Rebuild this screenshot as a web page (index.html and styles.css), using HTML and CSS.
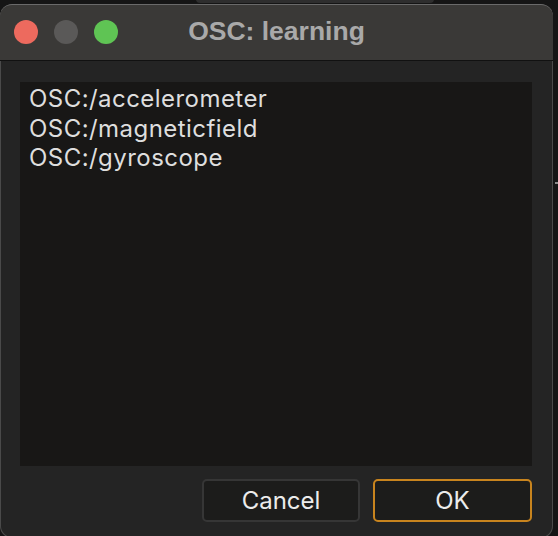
FILE: index.html
```html
<!DOCTYPE html>
<html>
<head>
<meta charset="utf-8">
<link rel="stylesheet" href="styles.css">
</head>
<body>
<div class="backdrop">
  <div class="behind"></div>
  <div class="tick"></div>
  <div class="window">
    <div class="titlebar">
      <div class="lights">
        <span class="light red"></span>
        <span class="light grey"></span>
        <span class="light green"></span>
      </div>
      <div class="title">OSC: learning</div>
    </div>
    <div class="content">
      <div class="list">
        <div class="item">OSC:/accelerometer</div>
        <div class="item">OSC:/magneticfield</div>
        <div class="item">OSC:/gyroscope</div>
      </div>
      <div class="buttons">
        <button class="btn cancel">Cancel</button>
        <button class="btn ok">OK</button>
      </div>
    </div>
  </div>
</div>
</body>
</html>
```

FILE: styles.css
```css
html, body {
  margin: 0;
  padding: 0;
  background: #151515;
  width: 558px;
  height: 536px;
  overflow: hidden;
}
.backdrop {
  position: relative;
  width: 558px;
  height: 536px;
  padding-top: 4px;
  box-sizing: border-box;
}
.behind {
  position: absolute;
  left: 196px;
  top: -8px;
  width: 238px;
  height: 11px;
  border-radius: 4px;
  background: #2e2e2e;
}
.tick {
  position: absolute;
  left: 555px;
  top: 182px;
  width: 3px;
  height: 2px;
  background: #8a8a8a;
}
.window {
  position: relative;
  width: 553px;
  height: 534px;
  border-radius: 12px;
  background: #242424;
  box-shadow: inset 0 0 0 1px #4a4a4a;
  overflow: hidden;
  display: flex;
  flex-direction: column;
}
.titlebar {
  flex: none;
  height: 57px;
  background: #3a3937;
  border-top: 1px solid #6a6a6a;
  box-sizing: border-box;
  border-bottom: 1px solid #111;
  display: flex;
  align-items: center;
  position: relative;
  border-radius: 12px 12px 0 0;
}
.lights {
  display: flex;
  gap: 16px;
  padding-left: 14px;
  margin-top: -1px;
}
.light {
  width: 24px;
  height: 24px;
  border-radius: 50%;
  display: block;
}
.red { background: #ed6a5e; }
.grey { background: #5a5958; }
.green { background: #5fc454; }
.title {
  position: absolute;
  left: 0;
  right: 0;
  top: 10px;
  text-align: center;
  font-family: "Liberation Sans", Arial, sans-serif;
  font-weight: bold;
  font-size: 26.5px;
  color: #a9a9a9;
  line-height: 32px;
}
.content {
  flex: 1;
  display: flex;
  flex-direction: column;
  padding: 21px 21px 0 20px;
}
.list {
  height: 384px;
  background: #181716;
  padding: 2px 9px;
  box-sizing: border-box;
  font-family: "Inter", sans-serif;
  font-size: 24px;
  letter-spacing: 0.45px;
  line-height: 29.5px;
  color: #dedede;
}
.buttons {
  display: flex;
  justify-content: flex-end;
  gap: 13px;
  margin-top: 13px;
}
.btn {
  width: 159px;
  height: 43px;
  border-radius: 5px;
  background: #1c1c1b;
  color: #ececec;
  font-family: "Inter", sans-serif;
  font-size: 24px;
  padding: 0;
}
.cancel {
  border: 2px solid #363636;
  width: 158px;
}
.ok {
  border: 2px solid #c8841e;
}
```
